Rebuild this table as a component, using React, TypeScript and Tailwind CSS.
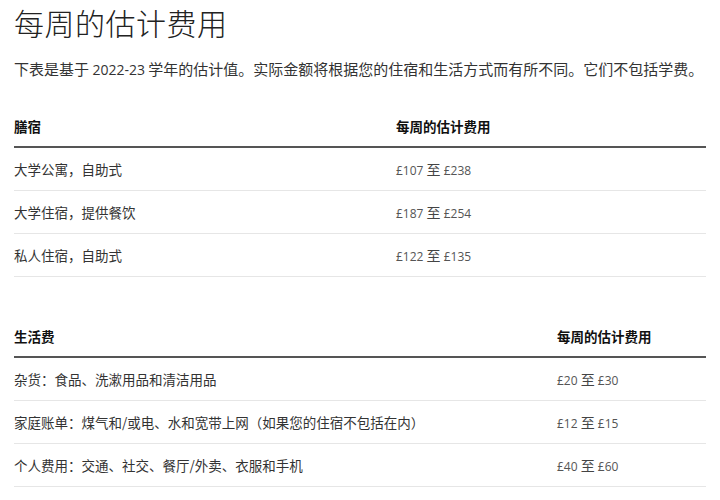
const cjk = "font-['Noto_Sans_CJK_SC',sans-serif]"
const latin = "font-['Open_Sans','Noto_Sans_CJK_SC',sans-serif]"

type Row = { label: string; from: string; to: string }

const housing: Row[] = [
  { label: "大学公寓，自助式", from: "£107", to: "£238" },
  { label: "大学住宿，提供餐饮", from: "£187", to: "£254" },
  { label: "私人住宿，自助式", from: "£122", to: "£135" },
]

const living: Row[] = [
  { label: "杂货：食品、洗漱用品和清洁用品", from: "£20", to: "£30" },
  { label: "家庭账单：煤气和/或电、水和宽带上网（如果您的住宿不包括在内）", from: "£12", to: "£15" },
  { label: "个人费用：交通、社交、餐厅/外卖、衣服和手机", from: "£40", to: "£60" },
]

const Price = ({ from, to }: { from: string; to: string }) => (
  <span className={`${latin} text-[12px] text-[#555]`}>
    {from} <span className={`${cjk} text-[14px] text-[#444]`}>至</span> {to}
  </span>
)

const CostTable = ({ title, rows, firstCol }: { title: string; rows: Row[]; firstCol: string }) => (
  <div className="w-[692px]">
    <div className="flex h-[42px] items-center border-b-2 border-[#555] text-[13.5px] font-bold text-[#111]">
      <div className={firstCol}>{title}</div>
      <div>每周的估计费用</div>
    </div>
    {rows.map((r) => (
      <div key={r.label} className="flex h-[43px] items-center border-b border-[#e6e6e6] text-[13.5px] text-[#333]">
        <div className={firstCol}>{r.label}</div>
        <Price from={r.from} to={r.to} />
      </div>
    ))}
  </div>
)

export default function App() {
  return (
    <div className={`${cjk} h-[500px] w-[720px] overflow-hidden bg-white px-[14px]`}>
      <h1 className="pt-[7px] text-[30px] leading-[30px] font-light tracking-[0.5px] text-[#222]">每周的估计费用</h1>
      <p className="mt-[24px] text-[15px] leading-[16px] text-[#333]">
        下表是基于 <span className={`${latin} text-[14px]`}>2022-23</span> 学年的估计值。实际金额将根据您的住宿和生活方式而有所不同。它们不包括学费。
      </p>
      <div className="mt-[28px]">
        <CostTable title="膳宿" rows={housing} firstCol="w-[382px]" />
      </div>
      <div className="mt-[39px]">
        <CostTable title="生活费" rows={living} firstCol="w-[543px]" />
      </div>
    </div>
  )
}
